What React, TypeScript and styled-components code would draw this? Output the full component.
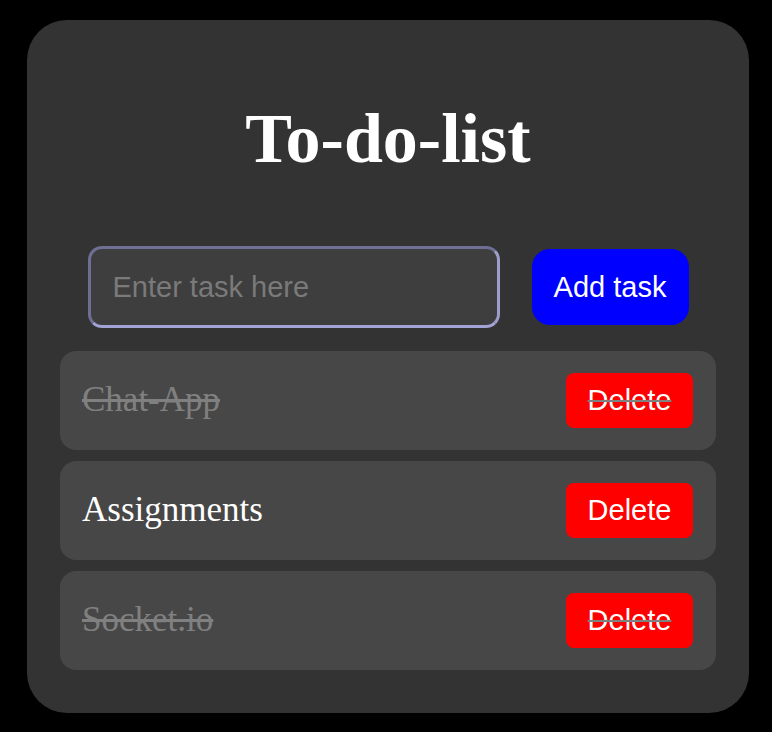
import React, { FC, useState } from 'react';
import styled, { createGlobalStyle } from 'styled-components';

const GlobalStyle = createGlobalStyle`
  html, body {
    margin: 0;
    padding: 0;
    background: #000;
  }
`;

const Card = styled.div`
  box-sizing: border-box;
  width: 722px;
  margin: 20px 0 0 27px;
  padding: 0 33px 43px;
  background: #333333;
  border-radius: 40px;
`;

const Title = styled.h1`
  margin: 0;
  padding: 84px 0 72px;
  font-family: 'Liberation Serif', serif;
  font-size: 70px;
  line-height: 1;
  font-weight: bold;
  color: #fff;
  text-align: center;
`;

const InputRow = styled.div`
  display: flex;
  align-items: center;
  justify-content: center;
  gap: 32px;
  margin-bottom: 23px;
`;

const TaskInput = styled.input`
  box-sizing: border-box;
  width: 412px;
  height: 82px;
  padding: 0 22px;
  background: #3e3e3e;
  border: 3px solid;
  border-color: #6f6f94 #9d9dcc #a3a3d6 #6f6f94;
  border-radius: 14px;
  font-family: 'Liberation Sans', Arial, sans-serif;
  font-size: 29px;
  color: #fff;
  outline: none;
  &::placeholder {
    color: #7a7a7a;
  }
`;

const AddButton = styled.button`
  width: 157px;
  height: 76px;
  padding: 0;
  border: none;
  border-radius: 18px;
  background: #0000ff;
  color: #fff;
  font-family: 'Liberation Sans', Arial, sans-serif;
  font-size: 29px;
  cursor: pointer;
`;

const List = styled.ul`
  list-style: none;
  margin: 0;
  padding: 0;
  display: flex;
  flex-direction: column;
  gap: 11.5px;
`;

const Item = styled.li`
  display: flex;
  align-items: center;
  justify-content: space-between;
  height: 98.5px;
  padding: 0 23px 0 22px;
  box-sizing: border-box;
  background: #474747;
  border-radius: 16px;
`;

const TaskText = styled.span<{ $done: boolean }>`
  font-family: 'Liberation Serif', serif;
  font-size: 35px;
  color: ${p => (p.$done ? '#808080' : '#fff')};
  text-decoration: ${p => (p.$done ? 'line-through' : 'none')};
  text-decoration-color: #808080;
  cursor: pointer;
`;

const DeleteButton = styled.button<{ $done: boolean }>`
  width: 127px;
  height: 55px;
  padding: 0;
  border: none;
  border-radius: 8px;
  background: #ff0000;
  color: #fff;
  font-family: 'Liberation Sans', Arial, sans-serif;
  font-size: 29px;
  text-decoration: ${p => (p.$done ? 'line-through' : 'none')};
  text-decoration-color: #808080;
  text-decoration-thickness: 2px;
  cursor: pointer;
`;

interface Task {
  text: string;
  done: boolean;
}

const App: FC = () => {
  const [tasks, setTasks] = useState<Task[]>([
    { text: 'Chat-App', done: true },
    { text: 'Assignments', done: false },
    { text: 'Socket.io', done: true },
  ]);
  const [value, setValue] = useState('');

  const addTask = () => {
    if (!value.trim()) return;
    setTasks([...tasks, { text: value.trim(), done: false }]);
    setValue('');
  };

  const toggle = (i: number) => {
    setTasks(tasks.map((t, idx) => (idx === i ? { ...t, done: !t.done } : t)));
  };

  const remove = (i: number) => {
    setTasks(tasks.filter((_, idx) => idx !== i));
  };

  return (
    <>
      <GlobalStyle />
      <Card>
        <Title>To-do-list</Title>
        <InputRow>
          <TaskInput
            placeholder="Enter task here"
            value={value}
            onChange={e => setValue(e.target.value)}
          />
          <AddButton onClick={addTask}>Add task</AddButton>
        </InputRow>
        <List>
          {tasks.map((t, i) => (
            <Item key={i}>
              <TaskText $done={t.done} onClick={() => toggle(i)}>
                {t.text}
              </TaskText>
              <DeleteButton $done={t.done} onClick={() => remove(i)}>
                Delete
              </DeleteButton>
            </Item>
          ))}
        </List>
      </Card>
    </>
  );
};

export default App;
